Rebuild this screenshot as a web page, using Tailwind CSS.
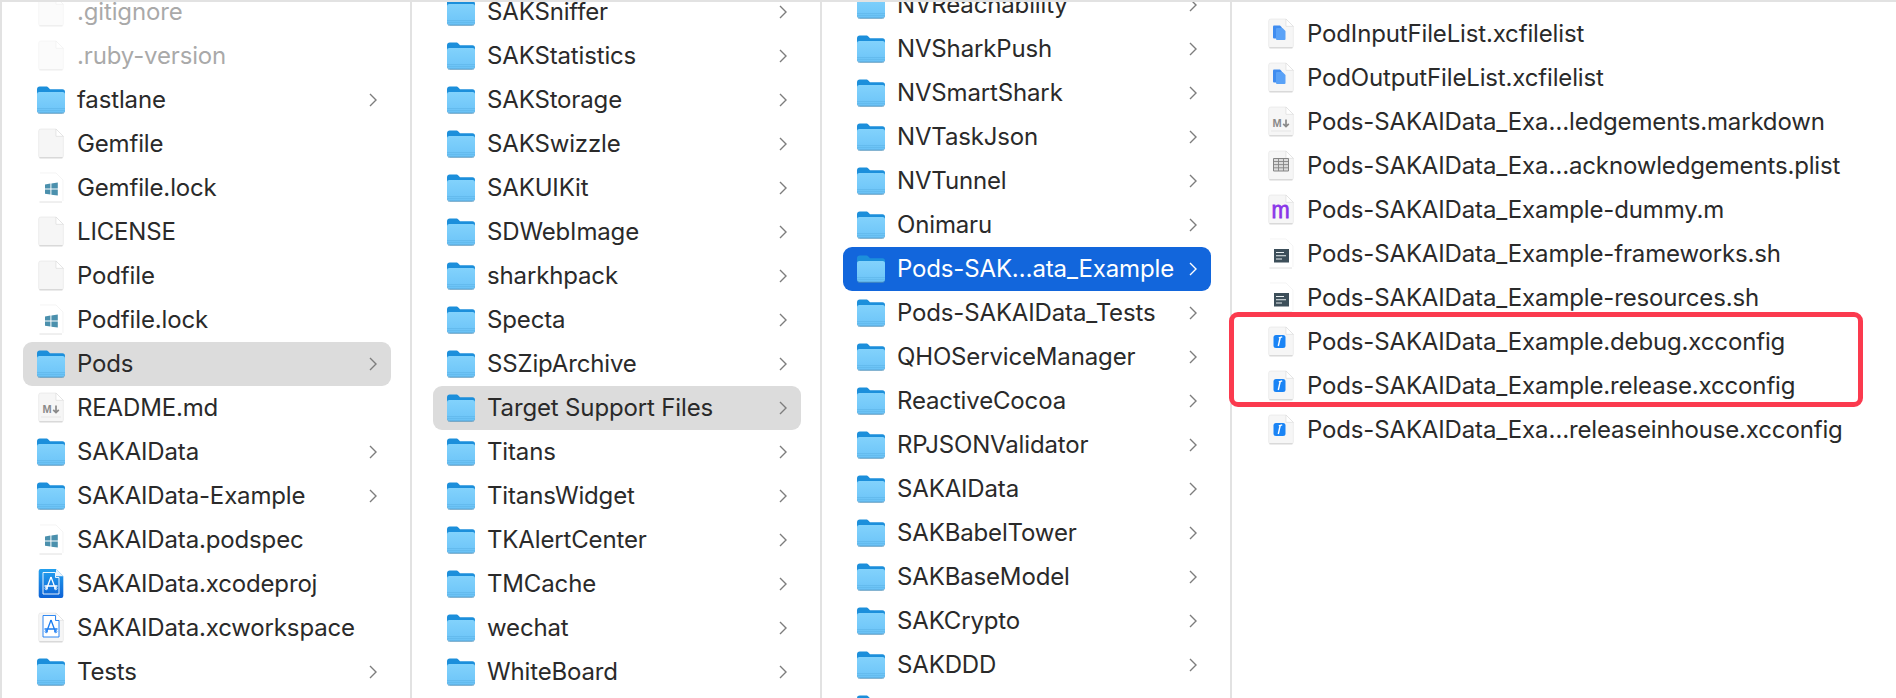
<!DOCTYPE html>
<html lang="en">
<head>
  <meta charset="UTF-8" />
  <meta name="viewport" content="width=device-width, initial-scale=1.0"/>
  <title>Finder - Target Support Files</title>
  <script src="https://cdn.jsdelivr.net/npm/@tailwindcss/browser@4"></script>
</head>
<body class="bg-white text-[#2a2a2a] font-['Inter','Liberation_Sans',sans-serif] text-[24px] tracking-[-0.15px]">

  <!-- Shared icons -->
  <svg class="absolute w-0 h-0" aria-hidden="true">
    <defs>
      <linearGradient id="folderBody" x1="0" y1="0" x2="0" y2="1">
        <stop offset="0" stop-color="#82d2fc"/>
        <stop offset="1" stop-color="#6cc4f8"/>
      </linearGradient>
      <linearGradient id="projBlue" x1="0" y1="0" x2="0" y2="1">
        <stop offset="0" stop-color="#23a0ee"/>
        <stop offset="1" stop-color="#0d62d6"/>
      </linearGradient>
      <symbol id="folder" viewBox="0 0 32 32">
        <path d="M2 27.5V5.5C2 3.6 3 2.6 4.8 2.6H11c1.2 0 1.8.4 2.6 1.2L15 5.2h12.4c1.7 0 2.6 1 2.6 2.6v19.7z" fill="#1c8fdb"/>
        <path d="M2 26.5V10.2C2 8.6 3 7.9 4.4 7.9h23.2c1.4 0 2.4.7 2.4 2.3v16.3c0 1.6-1 2.4-2.4 2.4H4.4C3 28.9 2 28.1 2 26.5z" fill="url(#folderBody)"/>
        <path d="M2 24.6h28M2 26.6h28" stroke="#5fb4e8" stroke-width=".7"/>
        <path d="M2.6 28.2c.6.8 1 1 1.8 1h23.2c.8 0 1.3-.3 1.8-1" fill="none" stroke="#4f93bd" stroke-width="1"/>
      </symbol>
      <symbol id="doc" viewBox="0 0 32 32">
        <path d="M3.700 3a2 2 0 0 1 2-2H21l7.300 7.300V28a2 2 0 0 1-2 2H5.700a2 2 0 0 1-2-2z" fill="#f6f6f6" stroke="#e4e4e4" stroke-width=".6"/>
        <path d="M21 1v7.300h7.300z" fill="#fff" stroke="#d8d8d8" stroke-width=".6"/>
        <path d="M4.500 29.800h23" stroke="#cfcfcf" stroke-width="1"/>
      </symbol>
      <symbol id="win" viewBox="0 0 32 32">
        <path d="M5 1h16l7 7v21" fill="none" stroke="#efefef" stroke-width=".7"/>
        <path d="M4.500 30h22.500" stroke="#dcdcdc" stroke-width=".9"/>
        <path d="M10 12.400l5.400-.8v5h-5.400zM16.400 11.500l6.400-1v6.100h-6.400zM10 17.600h5.400v5l-5.400-.8zM16.400 17.600h6.400v6l-6.400-.9z" fill="#4b90ad"/>
      </symbol>
      <symbol id="md" viewBox="0 0 32 32">
        <use href="#doc"/>
        <text x="7.500" y="21" font-family="Liberation Sans" font-weight="700" font-size="11" fill="#8a8a8a">M</text>
        <path d="M21 13.500v7M18.200 17.800l2.800 2.800 2.800-2.800" fill="none" stroke="#8a8a8a" stroke-width="1.700"/>
        <path d="M6 25h20" stroke="#e6e6e6" stroke-width="1"/>
      </symbol>
      <symbol id="table" viewBox="0 0 32 32">
        <use href="#doc"/>
        <path d="M8.500 8.500h15v12.500h-15z" fill="#dcdcdc" stroke="#858585" stroke-width="1"/>
        <path d="M8.500 11.500h15M8.500 14.600h15M8.500 17.800h15M13.500 8.500v12.500M18.500 8.500v12.500" stroke="#858585" stroke-width=".9"/>
      </symbol>
      <symbol id="mfile" viewBox="0 0 32 32">
        <use href="#doc"/>
        <text x="6.500" y="23.500" font-family="Liberation Sans" font-size="24" textLength="18" lengthAdjust="spacingAndGlyphs" fill="#8a35e8" stroke="#8a35e8" stroke-width=".8">m</text>
      </symbol>
      <symbol id="list" viewBox="0 0 32 32">
        <use href="#doc"/>
        <path d="M8 8.500a1 1 0 0 1 1-1h6l2 2v10a1 1 0 0 1-1 1H9a1 1 0 0 1-1-1z" fill="#3f8cf0"/>
        <path d="M11 11a1 1 0 0 1 1-1h5.500l3 3v8a1 1 0 0 1-1 1H12a1 1 0 0 1-1-1z" fill="#5aa2f7"/>
      </symbol>
      <symbol id="sh" viewBox="0 0 32 32">
        <path d="M5 1h16l7 7v21" fill="none" stroke="#efefef" stroke-width=".7"/>
        <path d="M4.500 30h22.500" stroke="#dcdcdc" stroke-width=".9"/>
        <rect x="9" y="11" width="15" height="13.500" fill="#3d4f5a"/>
        <path d="M11 14.500h8M11 17.800h10M11 21h6" stroke="#e8eef0" stroke-width="1.100"/>
      </symbol>
      <symbol id="config" viewBox="0 0 32 32">
        <use href="#doc"/>
        <rect x="8.500" y="9" width="12" height="13" rx="2.500" fill="#1a84f5"/>
        <path d="M13.300 20l1.900-8.500" stroke="#fff" stroke-width="1.400"/>
        <path d="M13.800 11.800l3.400-1" stroke="#fff" stroke-width="1.400"/>
      </symbol>
      <symbol id="proj" viewBox="0 0 32 32">
        <path d="M3.700 3a2 2 0 0 1 2-2H21l7.300 7.300V28a2 2 0 0 1-2 2H5.700a2 2 0 0 1-2-2z" fill="url(#projBlue)"/>
        <path d="M21 1v7.300h7.300z" fill="#eaf3fc"/>
        <path d="M8 4.500h12.500v5H24V26H8z" fill="none" stroke="#fff" stroke-width=".9"/>
        <path d="M16 9l-4.500 12M16 9l4.500 12M9.500 18h13" fill="none" stroke="#fff" stroke-width="1.300"/>
        <circle cx="11.300" cy="20.500" r="1.200" fill="none" stroke="#fff" stroke-width=".9"/>
        <circle cx="20.700" cy="20.500" r="1.200" fill="none" stroke="#fff" stroke-width=".9"/>
      </symbol>
      <symbol id="workspace" viewBox="0 0 32 32">
        <use href="#doc"/>
        <path d="M8 3.500h12.500v5H24V25H8z" fill="#fff" stroke="#1a7cf0" stroke-width=".9"/>
        <path d="M16 8l-4.500 12M16 8l4.500 12M9.500 17h13" fill="none" stroke="#1a7cf0" stroke-width="1.300"/>
        <circle cx="11.300" cy="19.500" r="1.200" fill="none" stroke="#1a7cf0" stroke-width=".9"/>
        <circle cx="20.700" cy="19.500" r="1.200" fill="none" stroke="#1a7cf0" stroke-width=".9"/>
      </symbol>
      <symbol id="chevron" viewBox="0 0 8 14">
        <path d="M1 1l6 6-6 6" fill="none" stroke="currentColor" stroke-width="1.400"/>
      </symbol>
    </defs>
  </svg>

  <main class="flex h-[698px] overflow-hidden border-t-2 border-[#e2e2e2]">

    <!-- Repo root -->
    <section class="w-[412px] shrink-0 border-x-2 border-[#e2e2e2] pl-[21px] pr-[19px]">
      <div class="-mt-[12px]">
        <div class="flex h-11 items-center pl-3 opacity-40"><svg class="w-8 h-8"><use href="#doc"/></svg><span class="ml-[10px]">.gitignore</span></div>
        <div class="flex h-11 items-center pl-3 opacity-40"><svg class="w-8 h-8"><use href="#doc"/></svg><span class="ml-[10px]">.ruby-version</span></div>
        <div class="flex h-11 items-center pl-3 pr-3.5"><svg class="w-8 h-8"><use href="#folder"/></svg><span class="ml-[10px] flex-1">fastlane</span><svg class="w-2 h-3.5 text-[#7d7d7d]"><use href="#chevron"/></svg></div>
        <div class="flex h-11 items-center pl-3"><svg class="w-8 h-8"><use href="#doc"/></svg><span class="ml-[10px]">Gemfile</span></div>
        <div class="flex h-11 items-center pl-3"><svg class="w-8 h-8"><use href="#win"/></svg><span class="ml-[10px]">Gemfile.lock</span></div>
        <div class="flex h-11 items-center pl-3"><svg class="w-8 h-8"><use href="#doc"/></svg><span class="ml-[10px]">LICENSE</span></div>
        <div class="flex h-11 items-center pl-3"><svg class="w-8 h-8"><use href="#doc"/></svg><span class="ml-[10px]">Podfile</span></div>
        <div class="flex h-11 items-center pl-3"><svg class="w-8 h-8"><use href="#win"/></svg><span class="ml-[10px]">Podfile.lock</span></div>
        <div class="flex h-11 items-center pl-3 pr-3.5 rounded-[9px] bg-[#dcdcdc]"><svg class="w-8 h-8"><use href="#folder"/></svg><span class="ml-[10px] flex-1">Pods</span><svg class="w-2 h-3.5 text-[#7d7d7d]"><use href="#chevron"/></svg></div>
        <div class="flex h-11 items-center pl-3"><svg class="w-8 h-8"><use href="#md"/></svg><span class="ml-[10px]">README.md</span></div>
        <div class="flex h-11 items-center pl-3 pr-3.5"><svg class="w-8 h-8"><use href="#folder"/></svg><span class="ml-[10px] flex-1">SAKAIData</span><svg class="w-2 h-3.5 text-[#7d7d7d]"><use href="#chevron"/></svg></div>
        <div class="flex h-11 items-center pl-3 pr-3.5"><svg class="w-8 h-8"><use href="#folder"/></svg><span class="ml-[10px] flex-1">SAKAIData-Example</span><svg class="w-2 h-3.5 text-[#7d7d7d]"><use href="#chevron"/></svg></div>
        <div class="flex h-11 items-center pl-3"><svg class="w-8 h-8"><use href="#win"/></svg><span class="ml-[10px]">SAKAIData.podspec</span></div>
        <div class="flex h-11 items-center pl-3"><svg class="w-8 h-8"><use href="#proj"/></svg><span class="ml-[10px]">SAKAIData.xcodeproj</span></div>
        <div class="flex h-11 items-center pl-3"><svg class="w-8 h-8"><use href="#workspace"/></svg><span class="ml-[10px]">SAKAIData.xcworkspace</span></div>
        <div class="flex h-11 items-center pl-3 pr-3.5"><svg class="w-8 h-8"><use href="#folder"/></svg><span class="ml-[10px] flex-1">Tests</span><svg class="w-2 h-3.5 text-[#7d7d7d]"><use href="#chevron"/></svg></div>
      </div>
    </section>

    <!-- Pods -->
    <section class="w-[410px] shrink-0 border-r-2 border-[#e2e2e2] pl-[21px] pr-[19px]">
      <div class="-mt-[12px]">
        <div class="flex h-11 items-center pl-3 pr-3.5"><svg class="w-8 h-8"><use href="#folder"/></svg><span class="ml-[10px] flex-1">SAKSniffer</span><svg class="w-2 h-3.5 text-[#7d7d7d]"><use href="#chevron"/></svg></div>
        <div class="flex h-11 items-center pl-3 pr-3.5"><svg class="w-8 h-8"><use href="#folder"/></svg><span class="ml-[10px] flex-1">SAKStatistics</span><svg class="w-2 h-3.5 text-[#7d7d7d]"><use href="#chevron"/></svg></div>
        <div class="flex h-11 items-center pl-3 pr-3.5"><svg class="w-8 h-8"><use href="#folder"/></svg><span class="ml-[10px] flex-1">SAKStorage</span><svg class="w-2 h-3.5 text-[#7d7d7d]"><use href="#chevron"/></svg></div>
        <div class="flex h-11 items-center pl-3 pr-3.5"><svg class="w-8 h-8"><use href="#folder"/></svg><span class="ml-[10px] flex-1">SAKSwizzle</span><svg class="w-2 h-3.5 text-[#7d7d7d]"><use href="#chevron"/></svg></div>
        <div class="flex h-11 items-center pl-3 pr-3.5"><svg class="w-8 h-8"><use href="#folder"/></svg><span class="ml-[10px] flex-1">SAKUIKit</span><svg class="w-2 h-3.5 text-[#7d7d7d]"><use href="#chevron"/></svg></div>
        <div class="flex h-11 items-center pl-3 pr-3.5"><svg class="w-8 h-8"><use href="#folder"/></svg><span class="ml-[10px] flex-1">SDWebImage</span><svg class="w-2 h-3.5 text-[#7d7d7d]"><use href="#chevron"/></svg></div>
        <div class="flex h-11 items-center pl-3 pr-3.5"><svg class="w-8 h-8"><use href="#folder"/></svg><span class="ml-[10px] flex-1">sharkhpack</span><svg class="w-2 h-3.5 text-[#7d7d7d]"><use href="#chevron"/></svg></div>
        <div class="flex h-11 items-center pl-3 pr-3.5"><svg class="w-8 h-8"><use href="#folder"/></svg><span class="ml-[10px] flex-1">Specta</span><svg class="w-2 h-3.5 text-[#7d7d7d]"><use href="#chevron"/></svg></div>
        <div class="flex h-11 items-center pl-3 pr-3.5"><svg class="w-8 h-8"><use href="#folder"/></svg><span class="ml-[10px] flex-1">SSZipArchive</span><svg class="w-2 h-3.5 text-[#7d7d7d]"><use href="#chevron"/></svg></div>
        <div class="flex h-11 items-center pl-3 pr-3.5 rounded-[9px] bg-[#dcdcdc]"><svg class="w-8 h-8"><use href="#folder"/></svg><span class="ml-[10px] flex-1">Target Support Files</span><svg class="w-2 h-3.5 text-[#7d7d7d]"><use href="#chevron"/></svg></div>
        <div class="flex h-11 items-center pl-3 pr-3.5"><svg class="w-8 h-8"><use href="#folder"/></svg><span class="ml-[10px] flex-1">Titans</span><svg class="w-2 h-3.5 text-[#7d7d7d]"><use href="#chevron"/></svg></div>
        <div class="flex h-11 items-center pl-3 pr-3.5"><svg class="w-8 h-8"><use href="#folder"/></svg><span class="ml-[10px] flex-1">TitansWidget</span><svg class="w-2 h-3.5 text-[#7d7d7d]"><use href="#chevron"/></svg></div>
        <div class="flex h-11 items-center pl-3 pr-3.5"><svg class="w-8 h-8"><use href="#folder"/></svg><span class="ml-[10px] flex-1">TKAlertCenter</span><svg class="w-2 h-3.5 text-[#7d7d7d]"><use href="#chevron"/></svg></div>
        <div class="flex h-11 items-center pl-3 pr-3.5"><svg class="w-8 h-8"><use href="#folder"/></svg><span class="ml-[10px] flex-1">TMCache</span><svg class="w-2 h-3.5 text-[#7d7d7d]"><use href="#chevron"/></svg></div>
        <div class="flex h-11 items-center pl-3 pr-3.5"><svg class="w-8 h-8"><use href="#folder"/></svg><span class="ml-[10px] flex-1">wechat</span><svg class="w-2 h-3.5 text-[#7d7d7d]"><use href="#chevron"/></svg></div>
        <div class="flex h-11 items-center pl-3 pr-3.5"><svg class="w-8 h-8"><use href="#folder"/></svg><span class="ml-[10px] flex-1">WhiteBoard</span><svg class="w-2 h-3.5 text-[#7d7d7d]"><use href="#chevron"/></svg></div>
      </div>
    </section>

    <!-- Target Support Files -->
    <section class="w-[410px] shrink-0 border-r-2 border-[#e2e2e2] pl-[21px] pr-[19px]">
      <div class="-mt-[19px]">
        <div class="flex h-11 items-center pl-3 pr-3.5"><svg class="w-8 h-8"><use href="#folder"/></svg><span class="ml-[10px] flex-1">NVReachability</span><svg class="w-2 h-3.5 text-[#7d7d7d]"><use href="#chevron"/></svg></div>
        <div class="flex h-11 items-center pl-3 pr-3.5"><svg class="w-8 h-8"><use href="#folder"/></svg><span class="ml-[10px] flex-1">NVSharkPush</span><svg class="w-2 h-3.5 text-[#7d7d7d]"><use href="#chevron"/></svg></div>
        <div class="flex h-11 items-center pl-3 pr-3.5"><svg class="w-8 h-8"><use href="#folder"/></svg><span class="ml-[10px] flex-1">NVSmartShark</span><svg class="w-2 h-3.5 text-[#7d7d7d]"><use href="#chevron"/></svg></div>
        <div class="flex h-11 items-center pl-3 pr-3.5"><svg class="w-8 h-8"><use href="#folder"/></svg><span class="ml-[10px] flex-1">NVTaskJson</span><svg class="w-2 h-3.5 text-[#7d7d7d]"><use href="#chevron"/></svg></div>
        <div class="flex h-11 items-center pl-3 pr-3.5"><svg class="w-8 h-8"><use href="#folder"/></svg><span class="ml-[10px] flex-1">NVTunnel</span><svg class="w-2 h-3.5 text-[#7d7d7d]"><use href="#chevron"/></svg></div>
        <div class="flex h-11 items-center pl-3 pr-3.5"><svg class="w-8 h-8"><use href="#folder"/></svg><span class="ml-[10px] flex-1">Onimaru</span><svg class="w-2 h-3.5 text-[#7d7d7d]"><use href="#chevron"/></svg></div>
        <div class="flex h-11 items-center pl-3 pr-3.5 rounded-[9px] bg-[#1266dc] text-white"><svg class="w-8 h-8"><use href="#folder"/></svg><span class="ml-[10px] flex-1">Pods-SAK…ata_Example</span><svg class="w-2 h-3.5 text-white"><use href="#chevron"/></svg></div>
        <div class="flex h-11 items-center pl-3 pr-3.5"><svg class="w-8 h-8"><use href="#folder"/></svg><span class="ml-[10px] flex-1">Pods-SAKAIData_Tests</span><svg class="w-2 h-3.5 text-[#7d7d7d]"><use href="#chevron"/></svg></div>
        <div class="flex h-11 items-center pl-3 pr-3.5"><svg class="w-8 h-8"><use href="#folder"/></svg><span class="ml-[10px] flex-1">QHOServiceManager</span><svg class="w-2 h-3.5 text-[#7d7d7d]"><use href="#chevron"/></svg></div>
        <div class="flex h-11 items-center pl-3 pr-3.5"><svg class="w-8 h-8"><use href="#folder"/></svg><span class="ml-[10px] flex-1">ReactiveCocoa</span><svg class="w-2 h-3.5 text-[#7d7d7d]"><use href="#chevron"/></svg></div>
        <div class="flex h-11 items-center pl-3 pr-3.5"><svg class="w-8 h-8"><use href="#folder"/></svg><span class="ml-[10px] flex-1">RPJSONValidator</span><svg class="w-2 h-3.5 text-[#7d7d7d]"><use href="#chevron"/></svg></div>
        <div class="flex h-11 items-center pl-3 pr-3.5"><svg class="w-8 h-8"><use href="#folder"/></svg><span class="ml-[10px] flex-1">SAKAIData</span><svg class="w-2 h-3.5 text-[#7d7d7d]"><use href="#chevron"/></svg></div>
        <div class="flex h-11 items-center pl-3 pr-3.5"><svg class="w-8 h-8"><use href="#folder"/></svg><span class="ml-[10px] flex-1">SAKBabelTower</span><svg class="w-2 h-3.5 text-[#7d7d7d]"><use href="#chevron"/></svg></div>
        <div class="flex h-11 items-center pl-3 pr-3.5"><svg class="w-8 h-8"><use href="#folder"/></svg><span class="ml-[10px] flex-1">SAKBaseModel</span><svg class="w-2 h-3.5 text-[#7d7d7d]"><use href="#chevron"/></svg></div>
        <div class="flex h-11 items-center pl-3 pr-3.5"><svg class="w-8 h-8"><use href="#folder"/></svg><span class="ml-[10px] flex-1">SAKCrypto</span><svg class="w-2 h-3.5 text-[#7d7d7d]"><use href="#chevron"/></svg></div>
        <div class="flex h-11 items-center pl-3 pr-3.5"><svg class="w-8 h-8"><use href="#folder"/></svg><span class="ml-[10px] flex-1">SAKDDD</span><svg class="w-2 h-3.5 text-[#7d7d7d]"><use href="#chevron"/></svg></div>
        <div class="flex h-11 items-center pl-3 pr-3.5"><svg class="w-8 h-8"><use href="#folder"/></svg></div>
      </div>
    </section>

    <!-- Pods-SAKAIData_Example -->
    <section class="relative flex-1 pl-[33px] pt-[10px]">
      <div class="flex h-11 items-center"><svg class="w-8 h-8"><use href="#list"/></svg><span class="ml-[10px]">PodInputFileList.xcfilelist</span></div>
      <div class="flex h-11 items-center"><svg class="w-8 h-8"><use href="#list"/></svg><span class="ml-[10px]">PodOutputFileList.xcfilelist</span></div>
      <div class="flex h-11 items-center"><svg class="w-8 h-8"><use href="#md"/></svg><span class="ml-[10px]">Pods-SAKAIData_Exa…ledgements.markdown</span></div>
      <div class="flex h-11 items-center"><svg class="w-8 h-8"><use href="#table"/></svg><span class="ml-[10px]">Pods-SAKAIData_Exa…acknowledgements.plist</span></div>
      <div class="flex h-11 items-center"><svg class="w-8 h-8"><use href="#mfile"/></svg><span class="ml-[10px]">Pods-SAKAIData_Example-dummy.m</span></div>
      <div class="flex h-11 items-center"><svg class="w-8 h-8"><use href="#sh"/></svg><span class="ml-[10px]">Pods-SAKAIData_Example-frameworks.sh</span></div>
      <div class="flex h-11 items-center"><svg class="w-8 h-8"><use href="#sh"/></svg><span class="ml-[10px]">Pods-SAKAIData_Example-resources.sh</span></div>
      <div class="flex h-11 items-center"><svg class="w-8 h-8"><use href="#config"/></svg><span class="ml-[10px]">Pods-SAKAIData_Example.debug.xcconfig</span></div>
      <div class="flex h-11 items-center"><svg class="w-8 h-8"><use href="#config"/></svg><span class="ml-[10px]">Pods-SAKAIData_Example.release.xcconfig</span></div>
      <div class="flex h-11 items-center"><svg class="w-8 h-8"><use href="#config"/></svg><span class="ml-[10px]">Pods-SAKAIData_Exa…releaseinhouse.xcconfig</span></div>

      <!-- Red annotation around the two xcconfig rows -->
      <div class="absolute left-[-3px] top-[310px] w-[634px] h-[95px] rounded-[9px] border-[5px] border-[#fb3a4e]"></div>
    </section>

  </main>

</body>
</html>
